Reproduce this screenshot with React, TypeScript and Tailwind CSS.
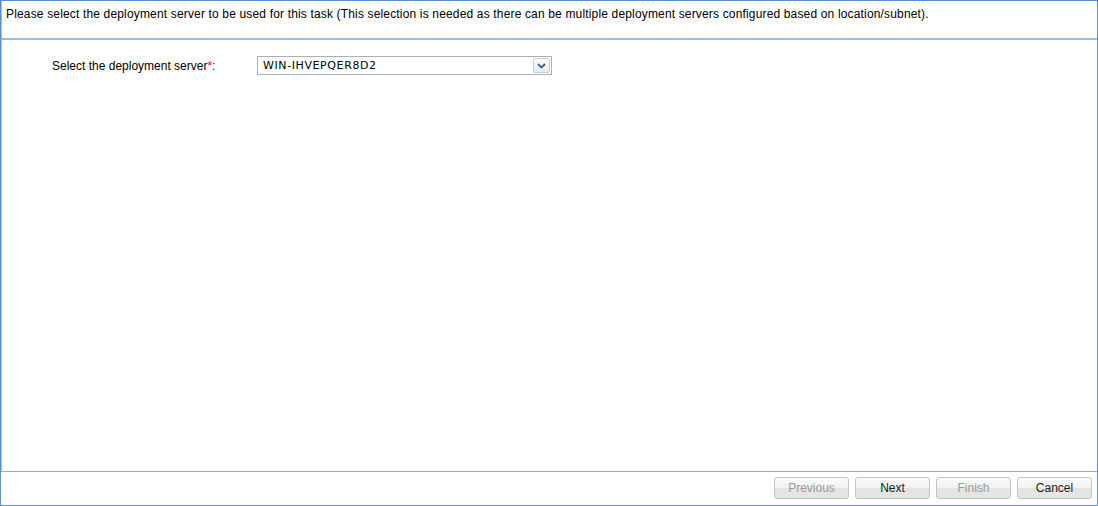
import React from "react";

function Btn({ label, disabled }: { label: string; disabled?: boolean }) {
  return (
    <div
      className={`w-[75px] h-[22px] rounded-[3px] border border-[#c4c4c4] flex items-center justify-center text-[12px] bg-[linear-gradient(to_bottom,#fbfbfb_0%,#f1f1f1_50%,#e3e3e3_51%,#e6e6e6_100%)] ${
        disabled ? "text-[#9a9a9a]" : "text-[#1a1a1a]"
      }`}
    >
      {label}
    </div>
  );
}

export default function App() {
  return (
    <div
      className="w-[1098px] h-[506px] bg-white border border-[#5d8fd3] flex flex-col overflow-hidden"
      style={{ fontFamily: '"Liberation Sans", Arial, sans-serif' }}
    >
      <div className="h-[37px] pl-[4px] pt-[6px] text-[12px] tracking-[0.16px] text-black leading-[15px] border-l border-[#9dbbe6]">
        Please select the deployment server to be used for this task (This selection is needed as there can be multiple deployment servers configured based on location/subnet).
      </div>
      <div className="h-[2px] bg-[#99bbe8]" />
      <div className="flex-1 border-l border-[#9dbbe6]">
        <div className="flex items-center mt-[16px] h-[19px]">
          <div className="w-[255px] pl-[50px] text-[12px] text-black">
            Select the deployment server<span className="text-[#e00000]">*</span>:
          </div>
          <div className="w-[295px] h-[19px] border border-[#a9b0b8] flex items-center">
            <div className="flex-1 pl-[5px] text-[11px] tracking-[0.6px] text-black leading-none" style={{ fontFamily: '"DejaVu Sans", Verdana, sans-serif' }}>
              WIN-IHVEPQER8D2
            </div>
            <div className="w-[17px] h-[15px] mr-[1px] rounded-[2px] border border-[#c8ccd2] bg-[linear-gradient(to_bottom,#fdfdfd,#e6e9ee)] flex items-center justify-center">
              <svg width="9" height="6" viewBox="0 0 9 6">
                <path d="M1 1 L4.5 4.5 L8 1" stroke="#3d5f93" strokeWidth="1.8" fill="none" />
              </svg>
            </div>
          </div>
        </div>
      </div>
      <div className="h-[1px] bg-[#8fb0dd]" />
      <div className="h-[33px] flex items-center justify-end gap-[6px] pr-[5px] pb-[1px]">
        <Btn label="Previous" disabled />
        <Btn label="Next" />
        <Btn label="Finish" disabled />
        <Btn label="Cancel" />
      </div>
    </div>
  );
}
